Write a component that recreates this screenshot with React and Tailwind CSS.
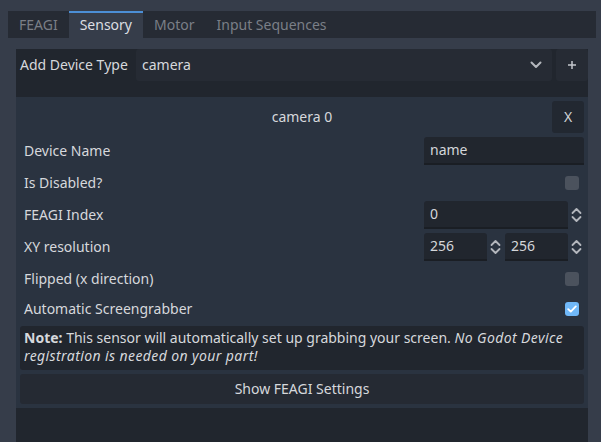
import React from "react";

const tabs = ["FEAGI", "Sensory", "Motor", "Input Sequences"];

function SpinArrows() {
  return (
    <div className="w-[16px] h-full flex items-center justify-center">
      <svg width="11" height="16" viewBox="0 0 11 16" fill="none">
        <path d="M1.5 6 L5.5 2 L9.5 6" stroke="#b4b7bd" strokeWidth="1.8" strokeLinecap="round" strokeLinejoin="round" />
        <path d="M1.5 10 L5.5 14 L9.5 10" stroke="#b4b7bd" strokeWidth="1.8" strokeLinecap="round" strokeLinejoin="round" />
      </svg>
    </div>
  );
}

function CheckBox({ checked }) {
  return checked ? (
    <div className="w-[14px] h-[14px] rounded-[3px] bg-[#70b8f8] flex items-center justify-center">
      <svg width="10" height="8" viewBox="0 0 10 8" fill="none">
        <path d="M1.2 4.2 L3.8 6.6 L8.8 1.4" stroke="#fff" strokeWidth="1.8" strokeLinecap="round" strokeLinejoin="round" />
      </svg>
    </div>
  ) : (
    <div className="w-[14px] h-[14px] rounded-[3px] bg-[#4b525d]" />
  );
}

function Field({ value, width }) {
  return (
    <div
      className={`${width} h-[28px] bg-[#21262e] rounded-t-[3px] border-b-2 border-[#1a1e24] flex items-center px-[6px] text-[#d4d6da]`}
    >
      {value}
    </div>
  );
}

export default function App() {
  return (
    <div className="w-[601px] h-[442px] overflow-hidden bg-[#363d4a] pt-[11px] pl-[8px] pr-[5px] font-['Noto_Sans',sans-serif] text-[14px] text-[#d6d8dc] leading-[18px]">
      {/* Tabs */}
      <div className="flex h-[27px] bg-[#262b34]">
        {tabs.map((t) => (
          <div
            key={t}
            className={
              t === "Sensory"
                ? "px-[11px] flex items-center bg-[#363d4a] border-t-2 border-[#4c8fd6] text-[#dcdee2] pb-[2px]"
                : "px-[11px] flex items-center text-[#7a7f87]"
            }
          >
            {t}
          </div>
        ))}
      </div>

      {/* Tab panel */}
      <div className="mt-[11px] mx-[8px] h-[400px] bg-[#21262e]">
        {/* Add device */}
        <div className="flex h-[32px] items-stretch">
          <div className="w-[120px] pl-[4px] flex items-center">Add Device Type</div>
          <div className="flex-1 bg-[#262b34] rounded-[3px] flex items-center justify-between pl-[6px] pr-[10px]">
            <span>camera</span>
            <svg width="12" height="8" viewBox="0 0 12 8" fill="none">
              <path d="M1.5 1.5 L6 6 L10.5 1.5" stroke="#b4b7bd" strokeWidth="2" strokeLinecap="round" strokeLinejoin="round" />
            </svg>
          </div>
          <div className="w-[32px] ml-[4px] bg-[#262b34] rounded-[3px] flex items-center justify-center">
            <svg width="10" height="10" viewBox="0 0 10 10" fill="none">
              <path d="M5 1 V9 M1 5 H9" stroke="#c4c7cc" strokeWidth="1.5" />
            </svg>
          </div>
        </div>

        {/* Camera panel */}
        <div className="mt-[16px] bg-[#2a3340] px-[4px] pt-[4px] pb-[4px]">
          <div className="flex h-[32px] items-center">
            <div className="w-[32px]" />
            <div className="flex-1 text-center">camera 0</div>
            <div className="w-[32px] h-[32px] bg-[#222831] rounded-[3px] flex items-center justify-center text-[#d0d2d6]">
              X
            </div>
          </div>

          <div className="flex h-[28px] mt-[4px] items-center">
            <div className="flex-1 pl-[4px]">Device Name</div>
            <Field value="name" width="w-[160px]" />
          </div>

          <div className="flex h-[28px] mt-[4px] items-center">
            <div className="flex-1 pl-[4px]">Is Disabled?</div>
            <div className="mr-[5px]">
              <CheckBox />
            </div>
          </div>

          <div className="flex h-[28px] mt-[4px] items-center">
            <div className="flex-1 pl-[4px]">FEAGI Index</div>
            <Field value="0" width="w-[144px]" />
            <SpinArrows />
          </div>

          <div className="flex h-[28px] mt-[4px] items-center">
            <div className="flex-1 pl-[4px]">XY resolution</div>
            <Field value="256" width="w-[63px]" />
            <SpinArrows />
            <div className="w-[2px]" />
            <Field value="256" width="w-[63px]" />
            <SpinArrows />
          </div>

          <div className="flex h-[28px] mt-[4px] items-center">
            <div className="flex-1 pl-[4px]">Flipped (x direction)</div>
            <div className="mr-[5px]">
              <CheckBox />
            </div>
          </div>

          <div className="flex h-[24px] mt-[4px] items-center">
            <div className="flex-1 pl-[4px]">Automatic Screengrabber</div>
            <div className="mr-[5px]">
              <CheckBox checked />
            </div>
          </div>

          <div className="mt-[5px] h-[44px] bg-[#21262e] rounded-[3px] px-[4px] pt-[3px]">
            <b className="font-bold">Note:</b> This sensor will automatically set up grabbing your screen.{" "}
            <i className="tracking-[0.4px]">No Godot Device registration is needed on your part!</i>
          </div>

          <div className="mt-[4px] h-[30px] bg-[#252a33] rounded-[3px] flex items-center justify-center">
            Show FEAGI Settings
          </div>
        </div>
      </div>
    </div>
  );
}
